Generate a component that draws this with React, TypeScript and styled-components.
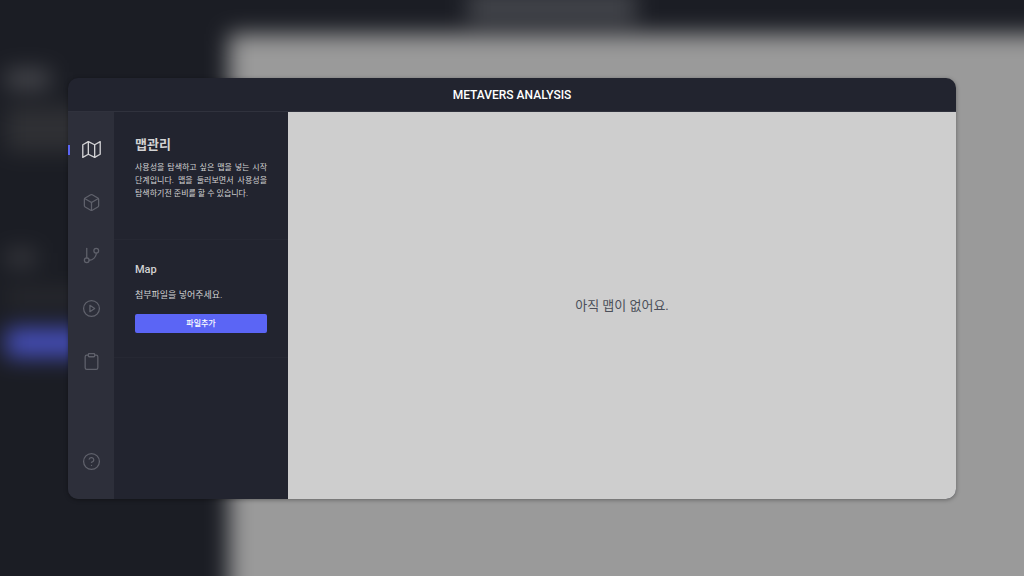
import React from "react";
import styled, { createGlobalStyle } from "styled-components";
import type { IconType } from "react-icons";
import { FiBox, FiClipboard, FiGitBranch, FiHelpCircle, FiMap, FiPlayCircle } from "react-icons/fi";

const GlobalStyle = createGlobalStyle`
  *, *::before, *::after { box-sizing: border-box; }
  body {
    margin: 0;
    background: #1b1d24;
    font-family: Roboto, "Noto Sans CJK KR", sans-serif;
  }
  h1, h2, p { margin: 0; }
  button { font: inherit; border: 0; cursor: pointer; }
`;

const Page = styled.div`
  position: relative;
  display: flex;
  min-height: 100vh;
  padding: 78px 68px 77px;
  overflow: hidden;
`;

/* Enlarged, out-of-focus copy of the window, behind the real one */
const Backdrop = styled.div`
  position: absolute;
  inset: -40px;
  display: flex;
  flex-direction: column;
  background: #1b1d24;
  filter: blur(11px);
`;

const BackdropHeader = styled.div`
  display: flex;
  flex: none;
  justify-content: center;
  align-items: flex-end;
  height: 74px;
  padding: 0 0 12px 80px;
`;

const BackdropTitle = styled.div`
  width: 168px;
  height: 30px;
  background: #44464c;
`;

const BackdropBody = styled.div`
  display: flex;
  flex: 1;
`;

const BackdropPanel = styled.div`
  width: 269px;
  padding: 36px 0 0 46px;
`;

const BackdropCanvas = styled.div`
  flex: 1;
  background: #9a9a9a;
`;

const Smudge = styled.div<{ $width: number; $height: number; $gap: number; $color: string }>`
  width: ${(p) => p.$width}px;
  height: ${(p) => p.$height}px;
  margin-bottom: ${(p) => p.$gap}px;
  background: ${(p) => p.$color};
`;

const AppWindow = styled.div`
  position: relative;
  display: flex;
  flex: 1;
  flex-direction: column;
  overflow: hidden;
  border-radius: 10px;
  background: #22242f;
  box-shadow: 0 1px 4px rgba(0, 0, 0, 0.35);
`;

const TitleBar = styled.header`
  display: flex;
  flex: none;
  align-items: center;
  justify-content: center;
  height: 34px;
  border-bottom: 1px solid #30323d;
`;

const AppTitle = styled.h1`
  color: #ffffff;
  font-size: 12px;
  line-height: 16px;
  font-weight: 500;
`;

const Body = styled.div`
  display: flex;
  flex: 1;
`;

const Rail = styled.nav`
  display: flex;
  flex: none;
  flex-direction: column;
  justify-content: space-between;
  width: 46px;
  padding: 11px 0;
  background: #2d2f3a;
`;

const RailGroup = styled.div`
  display: flex;
  flex-direction: column;
`;

const RailButton = styled.button<{ $active?: boolean }>`
  position: relative;
  display: flex;
  align-items: center;
  justify-content: center;
  height: 53px;
  padding: 0;
  background: none;
  color: ${(p) => (p.$active ? "#d2d2d4" : "#5f616b")};

  svg {
    width: 19px;
    height: 19px;
    stroke-width: ${(p) => (p.$active ? 1.7 : 1.6)};
  }

  &::before {
    content: "";
    display: ${(p) => (p.$active ? "block" : "none")};
    position: absolute;
    left: 0;
    width: 2px;
    height: 10px;
    background: #5b65f5;
  }
`;

const Panel = styled.aside`
  flex: none;
  width: 174px;
  background: #22242f;
`;

const Section = styled.section`
  padding: 22px 21px 24px;
  border-bottom: 1px solid #262833;
`;

const IntroSection = styled(Section)`
  padding-bottom: 39px;
`;

const PanelTitle = styled.h2`
  margin-bottom: 5px;
  color: #d2d2d3;
  font-size: 13px;
  line-height: 22px;
  font-weight: 700;
`;

const Description = styled.p`
  color: #d2d2d3;
  font-size: 8px;
  line-height: 13px;
  text-align: justify;
  word-break: keep-all;
`;

const SectionTitle = styled.h2`
  margin-bottom: 11px;
  color: #d2d2d3;
  font-size: 11px;
  line-height: 16px;
  font-weight: 500;
`;

const Hint = styled.p`
  margin-bottom: 12px;
  color: #d2d2d3;
  font-size: 9px;
  line-height: 13px;
`;

const AddButton = styled.button`
  display: block;
  width: 100%;
  height: 19px;
  padding: 0;
  border-radius: 2px;
  background: #5b65f5;
  color: #ffffff;
  font-size: 8px;
  line-height: 19px;
  font-weight: 500;
`;

const Canvas = styled.main`
  display: flex;
  flex: 1;
  align-items: center;
  justify-content: center;
  background: #cecece;
`;

const EmptyMessage = styled.p`
  color: #4b4e59;
  font-size: 13px;
  line-height: 20px;
`;

const steps: { label: string; icon: IconType }[] = [
  { label: "맵관리", icon: FiMap },
  { label: "오브젝트", icon: FiBox },
  { label: "경로", icon: FiGitBranch },
  { label: "재생", icon: FiPlayCircle },
  { label: "보고서", icon: FiClipboard },
];

export default function App() {
  return (
    <Page>
      <GlobalStyle />
      <Backdrop aria-hidden="true">
        <BackdropHeader>
          <BackdropTitle />
        </BackdropHeader>
        <BackdropBody>
          <BackdropPanel>
            <Smudge $width={44} $height={18} $gap={18} $color="#4a4b50" />
            <Smudge $width={150} $height={46} $gap={98} $color="#2f3034" />
            <Smudge $width={30} $height={16} $gap={24} $color="#393a3f" />
            <Smudge $width={100} $height={14} $gap={24} $color="#2b2c30" />
            <Smudge $width={150} $height={29} $gap={0} $color="#454eb8" />
          </BackdropPanel>
          <BackdropCanvas />
        </BackdropBody>
      </Backdrop>
      <AppWindow>
        <TitleBar>
          <AppTitle>METAVERS ANALYSIS</AppTitle>
        </TitleBar>
        <Body>
          <Rail>
            <RailGroup>
              {steps.map(({ label, icon: Icon }, index) => (
                <RailButton
                  key={label}
                  type="button"
                  aria-label={label}
                  aria-current={index === 0 ? "page" : undefined}
                  $active={index === 0}
                >
                  <Icon />
                </RailButton>
              ))}
            </RailGroup>
            <RailButton type="button" aria-label="도움말">
              <FiHelpCircle />
            </RailButton>
          </Rail>
          <Panel>
            <IntroSection>
              <PanelTitle>맵관리</PanelTitle>
              <Description>
                사용성을 탐색하고 싶은 맵을 넣는 시작 단계입니다. 맵을 둘러보면서 사용성을
                탐색하기전 준비를 할 수 있습니다.
              </Description>
            </IntroSection>
            <Section>
              <SectionTitle>Map</SectionTitle>
              <Hint>첨부파일을 넣어주세요.</Hint>
              <AddButton type="button">파일추가</AddButton>
            </Section>
          </Panel>
          <Canvas>
            <EmptyMessage>아직 맵이 없어요.</EmptyMessage>
          </Canvas>
        </Body>
      </AppWindow>
    </Page>
  );
}
